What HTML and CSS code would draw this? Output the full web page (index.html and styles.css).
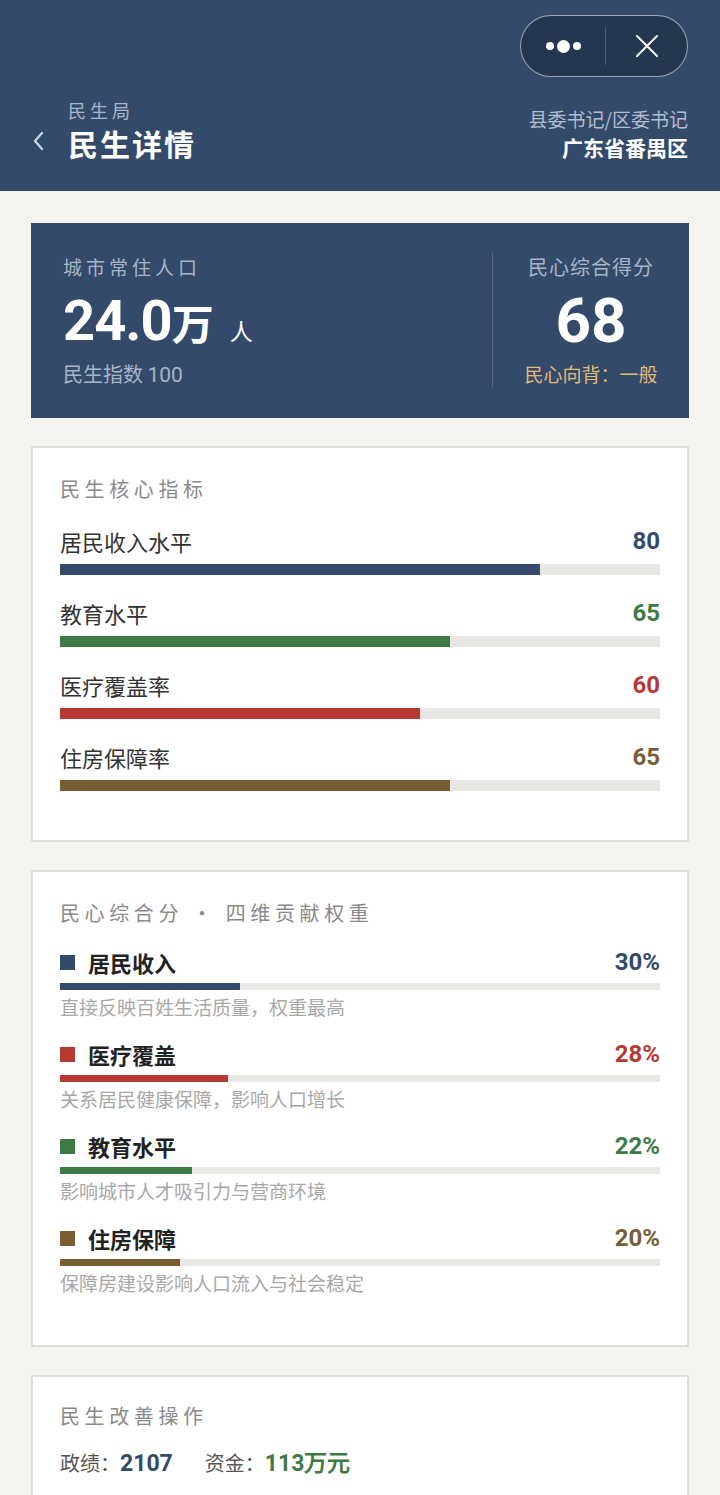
FILE: index.html
```html
<!DOCTYPE html>
<html lang="zh-CN">
<head>
    <meta charset="UTF-8">
    <meta name="viewport" content="width=device-width, initial-scale=1.0">
    <title>民生详情</title>
    <link rel="stylesheet" href="styles.css">
</head>
<body>
    <div class="header">
        <div class="capsule">
            <div class="dots"><i></i><i class="big"></i><i></i></div>
            <div class="capsule-line"></div>
            <svg class="close" width="24" height="24" viewBox="0 0 24 24"><path d="M2 2 L22 22 M22 2 L2 22" stroke="#fff" stroke-width="2" fill="none" stroke-linecap="round"/></svg>
        </div>
        <div class="title-row">
            <div class="title-left">
                <svg class="back" width="12" height="20" viewBox="0 0 12 20"><path d="M10 2 L3 10 L10 18" stroke="#d0d7e2" stroke-width="2.2" fill="none" stroke-linecap="round" stroke-linejoin="round"/></svg>
                <div>
                    <div class="dept">民生局</div>
                    <div class="page-title">民生详情</div>
                </div>
            </div>
            <div class="title-right">
                <div class="role">县委书记/区委书记</div>
                <div class="region">广东省番禺区</div>
            </div>
        </div>
    </div>

    <div class="main">
        <div class="hero">
            <div class="hero-left">
                <div class="hero-label">城市常住人口</div>
                <div class="hero-number"><span class="num">24.0</span><span class="wan">万</span><span class="unit">人</span></div>
                <div class="hero-sub">民生指数 <span class="idx">100</span></div>
            </div>
            <div class="hero-line"></div>
            <div class="hero-right">
                <div class="hero-label">民心综合得分</div>
                <div class="hero-score">68</div>
                <div class="hero-mood">民心向背：一般</div>
            </div>
        </div>

        <div class="card card-core">
            <div class="card-title">民生核心指标</div>
            <div class="metric">
                <div class="metric-row"><span>居民收入水平</span><b class="c-navy">80</b></div>
                <div class="track"><div class="fill bg-navy" style="width: 80%"></div></div>
            </div>
            <div class="metric">
                <div class="metric-row"><span>教育水平</span><b class="c-green">65</b></div>
                <div class="track"><div class="fill bg-green" style="width: 65%"></div></div>
            </div>
            <div class="metric">
                <div class="metric-row"><span>医疗覆盖率</span><b class="c-red">60</b></div>
                <div class="track"><div class="fill bg-red" style="width: 60%"></div></div>
            </div>
            <div class="metric">
                <div class="metric-row"><span>住房保障率</span><b class="c-brown">65</b></div>
                <div class="track"><div class="fill bg-brown" style="width: 65%"></div></div>
            </div>
        </div>

        <div class="card card-weight">
            <div class="card-title">民心综合分 · 四维贡献权重</div>
            <div class="weight">
                <div class="weight-row"><span class="name"><i class="mark bg-navy"></i>居民收入</span><b class="c-navy">30%</b></div>
                <div class="track thin"><div class="fill bg-navy" style="width: 30%"></div></div>
                <div class="desc">直接反映百姓生活质量，权重最高</div>
            </div>
            <div class="weight">
                <div class="weight-row"><span class="name"><i class="mark bg-red"></i>医疗覆盖</span><b class="c-red">28%</b></div>
                <div class="track thin"><div class="fill bg-red" style="width: 28%"></div></div>
                <div class="desc">关系居民健康保障，影响人口增长</div>
            </div>
            <div class="weight">
                <div class="weight-row"><span class="name"><i class="mark bg-green"></i>教育水平</span><b class="c-green">22%</b></div>
                <div class="track thin"><div class="fill bg-green" style="width: 22%"></div></div>
                <div class="desc">影响城市人才吸引力与营商环境</div>
            </div>
            <div class="weight">
                <div class="weight-row"><span class="name"><i class="mark bg-brown"></i>住房保障</span><b class="c-brown">20%</b></div>
                <div class="track thin"><div class="fill bg-brown" style="width: 20%"></div></div>
                <div class="desc">保障房建设影响人口流入与社会稳定</div>
            </div>
        </div>

        <div class="card card-action">
            <div class="card-title">民生改善操作</div>
            <div class="stats">
                <span>政绩：<b class="c-navy">2107</b></span>
                <span>资金：<b class="c-green">113万元</b></span>
            </div>
        </div>
    </div>
</body>
</html>
```

FILE: styles.css
```css
body {
    margin: 0;
    padding: 0;
    background-color: #f4f3ef;
    font-family: "Noto Sans CJK SC", "Noto Sans", sans-serif;
    color: #333;
}
.header {
    background-color: #334a6b;
    height: 191px;
    box-sizing: border-box;
    padding: 15px 32px 0 32px;
    color: #fff;
}
.capsule {
    width: 168px;
    height: 62px;
    margin-left: auto;
    box-sizing: border-box;
    border: 1px solid rgba(255, 255, 255, 0.55);
    border-radius: 31px;
    background-color: #253651;
    display: flex;
    align-items: center;
}
.dots {
    width: 84px;
    display: flex;
    align-items: center;
    justify-content: center;
    gap: 3px;
}
.dots i {
    display: block;
    width: 8px;
    height: 8px;
    border-radius: 50%;
    background-color: #fff;
}
.dots i.big {
    width: 13px;
    height: 13px;
}
.capsule-line {
    width: 1px;
    height: 38px;
    background-color: rgba(255, 255, 255, 0.2);
}
.close {
    margin-left: 29px;
}
.title-row {
    display: flex;
    justify-content: space-between;
    align-items: flex-end;
    margin-top: 21px;
}
.title-left {
    display: flex;
    align-items: center;
    gap: 24px;
}
.back {
    margin-top: 20px;
}
.dept {
    font-size: 18px;
    line-height: 24px;
    letter-spacing: 4px;
    color: #a9b6c9;
}
.page-title {
    font-size: 30px;
    line-height: 42px;
    font-weight: bold;
    letter-spacing: 2px;
}
.title-right {
    text-align: right;
}
.role {
    font-size: 19px;
    line-height: 26px;
    color: #b4bdcb;
}
.region {
    font-size: 21px;
    line-height: 30px;
    font-weight: bold;
    margin-bottom: 2px;
}
.main {
    padding: 32px 31px;
    display: flex;
    flex-direction: column;
    gap: 28px;
}
.hero {
    background-color: #334a6b;
    padding: 30px 0 30px 32px;
    display: flex;
    color: #fff;
}
.hero-left,
.hero-right {
    display: flex;
    flex-direction: column;
    gap: 8px;
}
.hero-left {
    flex: 1;
}
.hero-right {
    width: 196px;
    align-items: center;
}
.hero-line {
    width: 1px;
    background-color: rgba(255, 255, 255, 0.18);
}
.hero-label {
    font-size: 19px;
    line-height: 28px;
    letter-spacing: 4px;
    color: #aab5c6;
}
.hero-right .hero-label {
    font-size: 20px;
    letter-spacing: 1px;
}
.hero-number {
    line-height: 64px;
    height: 64px;
    font-weight: bold;
}
.hero-number .num {
    font-family: Roboto, sans-serif;
    font-size: 56px;
    letter-spacing: -1px;
}
.hero-number .wan {
    font-size: 42px;
}
.hero-number .unit {
    font-size: 23px;
    font-weight: normal;
    margin-left: 16px;
}
.hero-sub {
    font-size: 20px;
    line-height: 26px;
    color: #a9b4c5;
}
.hero-sub .idx {
    font-family: Roboto, sans-serif;
    font-size: 21px;
}
.hero-score {
    font-family: Roboto, sans-serif;
    font-size: 62px;
    line-height: 64px;
    font-weight: bold;
}
.hero-mood {
    font-size: 19px;
    line-height: 26px;
    color: #e2bb77;
}
.card {
    background-color: #fff;
    border: 2px solid #e0ded9;
    padding: 27px 27px 49px 27px;
}
.card-title {
    font-size: 20px;
    line-height: 28px;
    letter-spacing: 4.6px;
    color: #8a8a8a;
}
.metric {
    margin-top: 24px;
}
.metric-row,
.weight-row {
    display: flex;
    justify-content: space-between;
    align-items: center;
    height: 28px;
    font-size: 22px;
}
.metric-row b,
.weight-row b {
    font-family: Roboto, sans-serif;
    font-size: 24px;
}
.track {
    margin-top: 9px;
    height: 11px;
    background-color: #e8e7e4;
}
.track.thin {
    margin-top: 7px;
    height: 7px;
}
.fill {
    height: 100%;
}
.card-weight {
    padding-bottom: 50px;
}
.card-weight .card-title {
    margin-bottom: 4px;
}
.weight {
    margin-top: 21px;
}
.weight-row .name {
    display: flex;
    align-items: center;
    font-weight: bold;
    color: #222;
}
.mark {
    display: block;
    width: 15px;
    height: 15px;
    margin-right: 13px;
}
.desc {
    margin-top: 5px;
    font-size: 19px;
    line-height: 24px;
    color: #a8a8a8;
}
.card-action {
    padding-top: 25px;
    padding-bottom: 60px;
}
.stats {
    margin-top: 19px;
    display: flex;
    gap: 32px;
    font-size: 20px;
    line-height: 28px;
    color: #555;
}
.stats b {
    font-family: Roboto, sans-serif;
    font-size: 23px;
}
.c-navy { color: #334a6b; }
.c-green { color: #3e7a45; }
.c-red { color: #b73a32; }
.c-brown { color: #7a5d33; }
.bg-navy { background-color: #334a6b; }
.bg-green { background-color: #3e7a45; }
.bg-red { background-color: #b73a32; }
.bg-brown { background-color: #7a5d33; }
```
